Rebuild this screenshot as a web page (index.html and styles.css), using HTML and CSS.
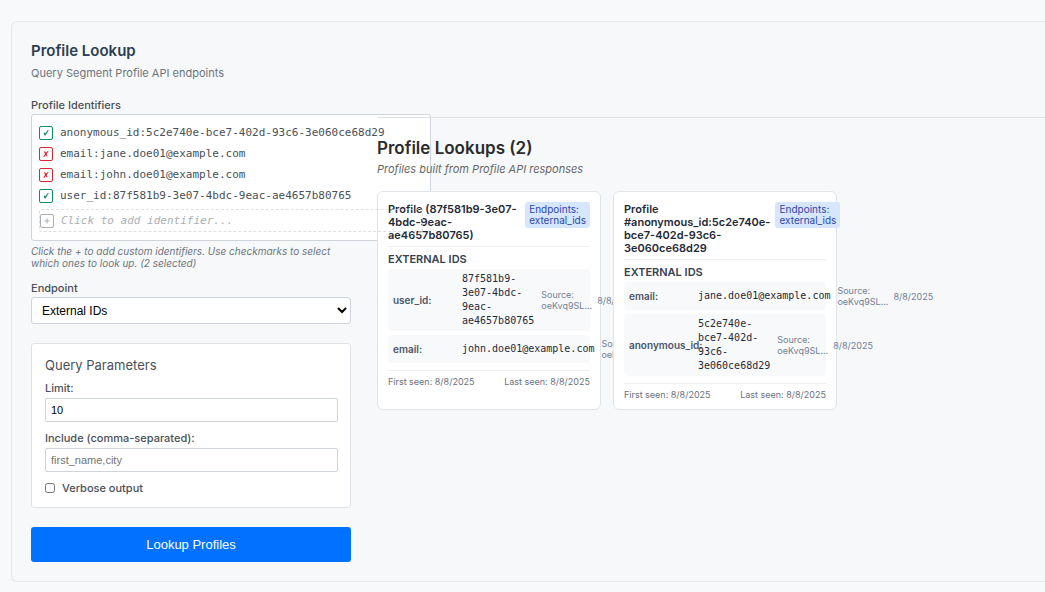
FILE: index.html
```html
<!DOCTYPE html>
<html lang="en">
<head>
<meta charset="utf-8">
<title>Profile Lookup</title>
<link rel="stylesheet" href="styles.css">
</head>
<body>
<main class="panel">
  <form class="lookup">
    <h1 class="title">Profile Lookup</h1>
    <p class="subtitle">Query Segment Profile API endpoints</p>

    <h2 class="label label-first">Profile Identifiers</h2>
    <ul class="identifiers">
      <li class="identifier">
        <button type="button" class="toggle on" aria-pressed="true" aria-label="Deselect anonymous_id"><svg viewBox="0 0 12 12"><path d="M3.4 6 4.5 5.6 5.2 6.6 7.8 3 8.8 3.1 5.6 8.6 4.7 8.6Z"/></svg></button>
        <span>anonymous_id:5c2e740e-bce7-402d-93c6-3e060ce68d29</span>
      </li>
      <li class="identifier">
        <button type="button" class="toggle off" aria-pressed="false" aria-label="Select jane.doe01@example.com"><svg viewBox="0 0 12 12"><path d="M4 3.5 5.2 3.2 5.9 4.8 7.8 3 8.6 3.3 6.6 5.9 7.5 8 6.5 8.5 5.6 7 4.2 8.9 3.3 8.4 5 6.1Z"/></svg></button>
        <span>email:jane.doe01@example.com</span>
      </li>
      <li class="identifier">
        <button type="button" class="toggle off" aria-pressed="false" aria-label="Select john.doe01@example.com"><svg viewBox="0 0 12 12"><path d="M4 3.5 5.2 3.2 5.9 4.8 7.8 3 8.6 3.3 6.6 5.9 7.5 8 6.5 8.5 5.6 7 4.2 8.9 3.3 8.4 5 6.1Z"/></svg></button>
        <span>email:john.doe01@example.com</span>
      </li>
      <li class="identifier">
        <button type="button" class="toggle on" aria-pressed="true" aria-label="Deselect user_id"><svg viewBox="0 0 12 12"><path d="M3.4 6 4.5 5.6 5.2 6.6 7.8 3 8.8 3.1 5.6 8.6 4.7 8.6Z"/></svg></button>
        <span>user_id:87f581b9-3e07-4bdc-9eac-ae4657b80765</span>
      </li>
      <li class="identifier add-row">
        <button type="button" class="toggle add" aria-label="Add identifier"><svg viewBox="0 0 12 12"><path d="M5.5 3.5h1v2h2v1h-2v2h-1v-2h-2v-1h2Z"/></svg></button>
        <span class="add-text">Click to add identifier...</span>
      </li>
    </ul>
    <p class="hint">Click the + to add custom identifiers. Use checkmarks to select which ones to look up. (2 selected)</p>

    <label class="label label-endpoint" for="endpoint">Endpoint</label>
    <select class="select" id="endpoint"><option>External IDs</option></select>

    <fieldset class="params">
      <h2 class="params-title">Query Parameters</h2>
      <label class="label label-limit" for="limit">Limit:</label>
      <input class="input" id="limit" type="text" value="10">
      <label class="label label-include" for="include">Include (comma-separated):</label>
      <input class="input" id="include" type="text" placeholder="first_name,city">
      <label class="label verbose"><input class="check" type="checkbox">Verbose output</label>
    </fieldset>

    <button class="submit" type="submit">Lookup Profiles</button>
  </form>

  <section class="results">
    <h2 class="results-title">Profile Lookups (2)</h2>
    <p class="results-sub">Profiles built from Profile API responses</p>
    <div class="cards">
      <article class="card">
        <header class="card-head">
          <h3 class="card-title">Profile (87f581b9-3e07-<br>4bdc-9eac-<br>ae4657b80765)</h3>
          <span class="badge">Endpoints:<br>external_ids</span>
        </header>
        <h4 class="section-title">EXTERNAL IDS</h4>
        <div class="row">
          <span class="key">user_id:</span>
          <span class="value">87f581b9-<br>3e07-4bdc-<br>9eac-<br>ae4657b80765</span>
          <span class="meta">Source:<br>oeKvq9SL...</span>
          <span class="meta">8/8/2025</span>
        </div>
        <div class="row">
          <span class="key">email:</span>
          <span class="value">john.doe01@example.com</span>
          <span class="meta">Source:<br>oeKvq9SL...</span>
          <span class="meta">8/8/2025</span>
        </div>
        <footer class="card-foot"><span>First seen: 8/8/2025</span><span>Last seen: 8/8/2025</span></footer>
      </article>
      <article class="card">
        <header class="card-head">
          <h3 class="card-title">Profile<br>#anonymous_id:5c2e740e-<br>bce7-402d-93c6-<br>3e060ce68d29</h3>
          <span class="badge">Endpoints:<br>external_ids</span>
        </header>
        <h4 class="section-title">EXTERNAL IDS</h4>
        <div class="row">
          <span class="key">email:</span>
          <span class="value">jane.doe01@example.com</span>
          <span class="meta">Source:<br>oeKvq9SL...</span>
          <span class="meta">8/8/2025</span>
        </div>
        <div class="row">
          <span class="key">anonymous_id:</span>
          <span class="value">5c2e740e-<br>bce7-402d-<br>93c6-<br>3e060ce68d29</span>
          <span class="meta">Source:<br>oeKvq9SL...</span>
          <span class="meta">8/8/2025</span>
        </div>
        <footer class="card-foot"><span>First seen: 8/8/2025</span><span>Last seen: 8/8/2025</span></footer>
      </article>
    </div>
  </section>
</main>
</body>
</html>
```

FILE: styles.css
```css
* { box-sizing: border-box; }
body {
  margin: 0;
  padding: 21px 0 10px 11px;
  background: #f8f9fb;
  color: #495057;
  font-family: Inter, "Liberation Sans", sans-serif;
  font-size: 11px;
}
h1, h2, h3, h4, p, ul { margin: 0; padding: 0; }

.panel {
  display: flex;
  gap: 26px;
  padding: 19px 0 19px 19px;
  border: 1px solid #e6e9ec;
  border-right: 0;
  border-radius: 6px 0 0 6px;
  background: #f7f8fa;
}
.lookup {
  display: flex;
  flex: 0 0 320px;
  flex-direction: column;
  min-width: 0;
}
.title { color: #2c3e50; font-size: 15px; font-weight: 600; line-height: 20px; }
.subtitle { margin-top: 4px; color: #6c757d; line-height: 16px; }
.label { font-size: 11px; font-weight: 500; line-height: 16px; }
.label-first { margin-top: 16px; }
.label-endpoint { margin-top: 11px; }
.label-limit { margin-top: 7px; }
.label-include { margin-top: 8px; }

.identifiers {
  width: 400px;
  margin-top: 1px;
  padding: 7px 7px 8px;
  border: 1px solid #ced4da;
  border-radius: 3px;
  background: #fff;
  font-family: "DejaVu Sans Mono", monospace;
  list-style: none;
}
.identifier {
  display: flex;
  align-items: center;
  gap: 7px;
  height: 21px;
  white-space: nowrap;
}
.toggle {
  width: 14px;
  height: 14px;
  padding: 0;
  border: 1px solid currentColor;
  border-radius: 2px;
  background: #fff;
}
.toggle svg { display: block; width: 12px; height: 12px; fill: currentColor; }
.on { color: #0b8f5f; }
.off { color: #dc2430; }
.add { color: #868e96; }
.add-row {
  position: relative;
  z-index: 1;
  height: 23px;
  margin-top: 3px;
  border: 1px dashed #ced4da;
  border-radius: 2px;
  opacity: 0.7;
}
.add-text { color: #868e96; font-style: italic; }
.hint { margin-top: 4px; color: #6c757d; font-size: 10px; font-style: italic; line-height: 12px; }

.select {
  height: 27px;
  margin-top: 1px;
  padding: 0 6px;
  border: 1px solid #ced4da;
  border-radius: 3px;
  background: #fff;
  color: #000;
  font: 12px "Liberation Sans", sans-serif;
}
.params {
  display: flex;
  flex-direction: column;
  min-width: 0;
  margin: 19px 0 0;
  padding: 13px 12px 11px 13px;
  border: 1px solid #dee2e6;
  border-radius: 3px;
  background: #fff;
}
.params-title { font-size: 13px; font-weight: 400; line-height: 16px; }
.input {
  width: 100%;
  height: 24px;
  margin-top: 2px;
  padding: 0 5px;
  border: 1px solid #ced4da;
  border-radius: 2px;
  color: #000;
  font: 11px "Liberation Sans", sans-serif;
}
.verbose { display: flex; align-items: center; gap: 7px; margin-top: 8px; }
.check { width: 10px; height: 10px; margin: 0; }
.submit {
  height: 35px;
  margin-top: 19px;
  border: 0;
  border-radius: 3px;
  background: #0072ff;
  color: #fff;
  font: 13px "Liberation Sans", sans-serif;
}

.results {
  flex: 1;
  min-width: 0;
  margin-top: 76px;
  padding-top: 20px;
  border-top: 1px solid #dee2e6;
}
.results-title { color: #2b2b2b; font-size: 17px; font-weight: 600; line-height: 20px; }
.results-sub { margin-top: 3px; color: #666; font-style: italic; line-height: 16px; }
.cards { display: flex; gap: 12px; margin-top: 14px; }
.card {
  flex: 0 0 224px;
  min-width: 0;
  padding: 10px 10px 8px;
  border: 1px solid #e1e5ea;
  border-radius: 6px;
  background: #fff;
}
.card-head {
  display: flex;
  align-items: flex-start;
  justify-content: space-between;
  gap: 5px;
  padding-bottom: 4px;
  border-bottom: 1px solid #edf0f3;
}
.card-title {
  padding-top: 1px;
  color: #1f2937;
  font-size: 11px;
  font-weight: 600;
  line-height: 13px;
  white-space: nowrap;
}
.badge {
  flex: none;
  padding: 2px 4px;
  border-radius: 3px;
  background: #d6e6fd;
  color: #2f46ad;
  font-size: 10px;
  font-weight: 400;
  line-height: 11px;
}
.section-title {
  margin: 6px 0 3px;
  color: #374151;
  font-size: 11px;
  font-weight: 600;
  line-height: 13px;
}
.row {
  display: flex;
  align-items: center;
  gap: 5px;
  padding: 3px 5px;
  border-radius: 4px;
  background: #f8f9fb;
  white-space: nowrap;
}
.row + .row { margin-top: 4px; }
.key { flex: 0 0 64px; min-width: 0; color: #4a5568; font-size: 10px; font-weight: 600; }
.value {
  flex: none;
  padding-right: 2px;
  color: #1f2937;
  font-family: "DejaVu Sans Mono", monospace;
  font-size: 10px;
  line-height: 14px;
}
.meta { flex: none; color: #718096; font-size: 9px; line-height: 11px; }
.card-foot {
  display: flex;
  justify-content: space-between;
  margin-top: 7px;
  padding-top: 5px;
  border-top: 1px solid #edf0f3;
  color: #6b7280;
  font-size: 9px;
  line-height: 12px;
}
```
